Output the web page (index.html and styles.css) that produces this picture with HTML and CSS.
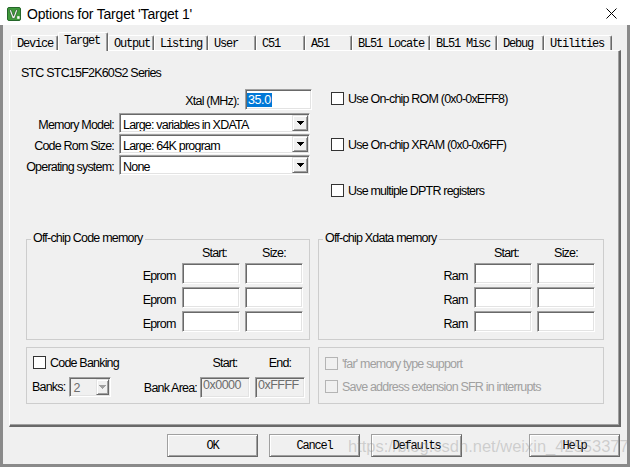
FILE: index.html
```html
<!DOCTYPE html>
<html lang="en">
<head>
<meta charset="utf-8">
<title>Options for Target 'Target 1'</title>
<link rel="stylesheet" href="styles.css">
</head>
<body>
<div class="window">
  <header class="titlebar">
    <svg class="app-icon" viewBox="0 0 14 14" aria-hidden="true">
      <rect x="0.5" y="0.5" width="13" height="13" rx="1.5" fill="#3f9a3a" stroke="#25662a"/>
      <path d="M2.2 2.8 L5.4 11.4 L7.6 11.4 L10.8 2.8 L8.8 2.8 L6.5 9.2 L4.2 2.8 Z" fill="#fff" stroke="#16401a" stroke-width="0.6"/>
      <rect x="10.2" y="9.2" width="2.4" height="2.6" fill="#fff"/>
    </svg>
    <span class="title">Options for Target 'Target 1'</span>
    <svg class="close" viewBox="0 0 11 11" aria-hidden="true">
      <path d="M0.5 0.5 L10.5 10.5 M10.5 0.5 L0.5 10.5" stroke="#000" stroke-width="1"/>
    </svg>
  </header>

  <div class="frame">
    <nav class="tabs">
      <div class="tab">Device</div>
      <div class="tab active">Target</div>
      <div class="tab">Output</div>
      <div class="tab">Listing</div>
      <div class="tab">User</div>
      <div class="tab">C51</div>
      <div class="tab">A51</div>
      <div class="tab">BL51 Locate</div>
      <div class="tab">BL51 Misc</div>
      <div class="tab">Debug</div>
      <div class="tab">Utilities</div>
    </nav>

    <section class="panel">
      <div class="series">STC STC15F2K60S2 Series</div>

      <div class="top">
        <div class="basic">
          <div class="xtal-row">
            <span class="lbl">Xtal (MHz):</span>
            <div class="field xtal"><span class="sel-text">35.0</span></div>
          </div>
          <div class="form">
            <span class="flabel">Memory Model:</span>
            <div class="select">
              <span class="value">Large: variables in XDATA</span>
              <span class="drop"><svg class="arrow" viewBox="0 0 7 4"><path d="M0 0h7v1h-1v1h-1v1h-1v1h-1v-1h-1v-1h-1v-1h-1z"/></svg></span>
            </div>
            <span class="flabel">Code Rom Size:</span>
            <div class="select">
              <span class="value">Large: 64K program</span>
              <span class="drop"><svg class="arrow" viewBox="0 0 7 4"><path d="M0 0h7v1h-1v1h-1v1h-1v1h-1v-1h-1v-1h-1v-1h-1z"/></svg></span>
            </div>
            <span class="flabel">Operating system:</span>
            <div class="select">
              <span class="value">None</span>
              <span class="drop"><svg class="arrow" viewBox="0 0 7 4"><path d="M0 0h7v1h-1v1h-1v1h-1v1h-1v-1h-1v-1h-1v-1h-1z"/></svg></span>
            </div>
          </div>
        </div>

        <div class="options">
          <div class="check"><span class="cb"></span><span class="ctext">Use On-chip ROM (0x0-0xEFF8)</span></div>
          <div class="check"><span class="cb"></span><span class="ctext">Use On-chip XRAM (0x0-0x6FF)</span></div>
          <div class="check"><span class="cb"></span><span class="ctext">Use multiple DPTR registers</span></div>
        </div>
      </div>

      <div class="groups">
        <fieldset class="group mem">
          <legend>Off-chip Code memory</legend>
          <div class="mem-grid">
            <span></span><span class="hd hd-start">Start:</span><span class="hd">Size:</span>
            <span class="rl">Eprom</span><div class="field cell"></div><div class="field cell"></div>
            <span class="rl">Eprom</span><div class="field cell"></div><div class="field cell"></div>
            <span class="rl">Eprom</span><div class="field cell"></div><div class="field cell"></div>
          </div>
        </fieldset>

        <fieldset class="group mem xdata">
          <legend>Off-chip Xdata memory</legend>
          <div class="mem-grid">
            <span></span><span class="hd hd-start">Start:</span><span class="hd">Size:</span>
            <span class="rl">Ram</span><div class="field cell"></div><div class="field cell"></div>
            <span class="rl">Ram</span><div class="field cell"></div><div class="field cell"></div>
            <span class="rl">Ram</span><div class="field cell"></div><div class="field cell"></div>
          </div>
        </fieldset>

        <div class="group bank">
          <div class="bank-row1">
            <div class="check"><span class="cb"></span><span class="ctext">Code Banking</span></div>
            <div class="bank-heads"><span>Start:</span><span>End:</span></div>
          </div>
          <div class="bank-row2">
            <div class="bank-left">
              <span class="banks-lbl">Banks:</span>
              <div class="select dis banks">
                <span class="value">2</span>
                <span class="drop"><svg class="arrow" viewBox="0 0 7 4"><path d="M0 0h7v1h-1v1h-1v1h-1v1h-1v-1h-1v-1h-1v-1h-1z"/></svg></span>
              </div>
            </div>
            <div class="bank-right">
              <span class="area-lbl">Bank Area:</span>
              <div class="field dis addr">0x0000</div>
              <div class="field dis addr">0xFFFF</div>
            </div>
          </div>
        </div>

        <div class="group far">
          <div class="check"><span class="cb dis"></span><span class="ctext dis-text">'far' memory type support</span></div>
          <div class="check"><span class="cb dis"></span><span class="ctext dis-text">Save address extension SFR in interrupts</span></div>
        </div>
      </div>
    </section>

    <div class="buttons">
      <button class="btn" type="button">OK</button>
      <button class="btn" type="button">Cancel</button>
      <button class="btn" type="button">Defaults</button>
      <button class="btn btn-help" type="button">Help</button>
    </div>
  </div>

  <div class="watermark">https://blog.csdn.net/weixin_42553377</div>
</div>
</body>
</html>
```

FILE: styles.css
```css
* { box-sizing: border-box; }
html, body { margin: 0; padding: 0; }
body {
  width: 630px;
  height: 467px;
  overflow: hidden;
  background: #fff;
  font-family: "Liberation Sans", Arial, sans-serif;
  font-size: 12.5px;
  letter-spacing: -0.8px;
  line-height: 14px;
  color: #000;
}

.window {
  position: relative;
  width: 630px;
  height: 467px;
  display: flex;
  flex-direction: column;
}

/* ---------- title bar ---------- */
.titlebar {
  flex: none;
  height: 25px;
  display: flex;
  align-items: center;
  padding: 2px 13px 0 7px;
  background: #fff;
}
.app-icon { width: 14px; height: 14px; flex: none; margin-right: 6px; }
.title {
  flex: 1;
  font-family: "Liberation Sans", Arial, sans-serif;
  font-size: 14px;
  line-height: 16px;
  letter-spacing: -0.2px;
}
.close { width: 11px; height: 11px; flex: none; }

/* ---------- frame ---------- */
.frame {
  flex: 1;
  display: flex;
  flex-direction: column;
  background: #f0f0f0;
  border: 3px solid #8a8a8a;
  border-top: 0;
  padding: 0 6px;
}

/* ---------- tabs ---------- */
.tabs {
  flex: none;
  display: flex;
  align-items: flex-end;
  height: 18px;
  margin-top: 7px;
  padding-left: 2px;
  position: relative;
  z-index: 1;
}
.tab {
  flex: none;
  height: 15px;
  padding: 2px 0 0 5px;
  background: #f0f0f0;
  border-top: 1px solid #fff;
  border-left: 1px solid #fff;
  border-right: 1px solid #696969;
  box-shadow: inset -1px 0 0 #a0a0a0;
  border-top-left-radius: 2px;
  border-top-right-radius: 2px;
  font-family: "Liberation Mono", "Courier New", monospace;
  font-size: 12px;
  line-height: 12px;
  letter-spacing: -1.2px;
  white-space: nowrap;
}
.tab.active {
  height: 19px;
  margin-bottom: -1px;
  padding-top: 2px;
}
.tab:nth-child(1) { width: 47px; }
.tab:nth-child(2) { width: 50px; }
.tab:nth-child(3) { width: 46px; }
.tab:nth-child(4) { width: 54px; }
.tab:nth-child(5) { width: 48px; }
.tab:nth-child(6) { width: 49px; }
.tab:nth-child(7) { width: 47px; }
.tab:nth-child(8) { width: 78px; }
.tab:nth-child(9) { width: 67px; }
.tab:nth-child(10) { width: 47px; }
.tab:nth-child(11) { width: 68px; }

/* ---------- panel ---------- */
.panel {
  flex: none;
  height: 377px;
  border-top: 1px solid #fff;
  border-left: 1px solid #fff;
  border-right: 2px solid #696969;
  border-bottom: 2px solid #696969;
  box-shadow: inset -1px -1px 0 #a0a0a0;
}
.series { margin: 15px 0 0 11px; height: 14px; white-space: nowrap; }

.top { display: flex; margin-top: 9px; }
.basic { width: 302px; flex: none; }
.xtal-row { display: flex; justify-content: flex-end; gap: 6px; height: 21px; }
.xtal-row .lbl { padding-top: 5px; white-space: nowrap; }

.field {
  background: #fff;
  border: 1px solid;
  border-color: #a0a0a0 #fff #fff #a0a0a0;
  box-shadow: inset 1px 1px 0 #696969, inset -1px -1px 0 #e3e3e3;
}
.xtal { width: 67px; height: 21px; padding: 3px 0 0 1px; }
.sel-text {
  display: inline-block;
  height: 14px;
  padding: 0 1px;
  background: #0078d7;
  color: #fff;
  letter-spacing: -0.4px;
}

.form {
  display: grid;
  grid-template-columns: 104px 191px;
  column-gap: 5px;
  row-gap: 1px;
  margin-top: 3px;
}
.flabel { text-align: right; padding-top: 4.5px; white-space: nowrap; }

.select {
  display: flex;
  height: 20px;
  background: #fff;
  border: 1px solid;
  border-color: #a0a0a0 #fff #fff #a0a0a0;
  box-shadow: inset 1px 1px 0 #696969, inset -1px -1px 0 #e3e3e3;
  padding: 1px;
}
.select .value { flex: 1; padding: 2.5px 0 0 2px; white-space: nowrap; overflow: hidden; }
.drop {
  width: 16px;
  flex: none;
  display: flex;
  align-items: center;
  justify-content: center;
  background: #f0f0f0;
  border: 1px solid;
  border-color: #e3e3e3 #696969 #696969 #e3e3e3;
  box-shadow: inset 1px 1px 0 #fff, inset -1px -1px 0 #a0a0a0;
}
.arrow { width: 7px; height: 4px; fill: #000; display: block; }

.options {
  display: flex;
  flex-direction: column;
  gap: 33px;
  margin-left: 19px;
  padding-top: 3px;
}
.check { display: flex; align-items: flex-start; gap: 4px; height: 13px; white-space: nowrap; }
.cb {
  width: 13px;
  height: 13px;
  flex: none;
  background: #fff;
  border: 1px solid #333;
}
.cb.dis { background: #f0f0f0; border-color: #b4b4b4; }
.dis-text { color: #a0a0a0; }

/* ---------- groups ---------- */
.groups {
  display: grid;
  grid-template-columns: 284px 286px;
  column-gap: 8px;
  row-gap: 7px;
  margin: 35px 0 0 16px;
}
.group {
  margin: 0;
  min-width: 0;
  border: 1px solid #cdcdcd;
  padding: 0 6px 7px;
}
.group legend {
  padding: 0 2px 3px;
  margin-left: -2px;
  line-height: 12px;
  white-space: nowrap;
}
.group.xdata { padding-right: 8px; }

.mem-grid {
  display: grid;
  grid-template-columns: 1fr 58px 58px;
  column-gap: 5px;
  row-gap: 3px;
}
.mem-grid .hd { text-align: center; line-height: 12px; margin-bottom: 1px; }
.mem-grid .hd-start { padding-left: 7px; }
.rl { text-align: right; align-self: center; padding: 4px 1.5px 0 0; }
.cell { height: 21px; }

.bank { padding: 8px 4px 5px 6px; }
.bank-row1 { display: flex; justify-content: space-between; height: 13px; }
.bank-heads { display: flex; gap: 5px; }
.bank-heads span { width: 50px; text-align: center; }
.bank-row2 { display: flex; justify-content: space-between; margin-top: 8px; height: 21px; }
.bank-left { display: flex; gap: 4px; margin-left: -1px; }
.banks-lbl { padding-top: 3px; }
.select.dis { background: #f0f0f0; color: #6d6d6d; }
.select.dis .value { padding-top: 1.5px; }
.select.dis .drop { width: 13px; }
.select.dis .arrow { fill: #a0a0a0; }
.banks { width: 42px; }
.bank-right { display: flex; }
.area-lbl { padding-top: 4px; margin-right: 3px; }
.addr { width: 50px; height: 21px; background: #f0f0f0; color: #6d6d6d; padding: 1px 0 0 2px; line-height: 12px; letter-spacing: -0.5px; }
.addr + .addr { margin-left: 5px; }

.far { display: flex; flex-direction: column; gap: 10px; padding: 9px 6px 0; }

/* ---------- buttons ---------- */
.buttons {
  flex: none;
  display: flex;
  gap: 11px;
  margin-top: 7px;
  padding-left: 158px;
}
.btn {
  appearance: none;
  width: 91px;
  height: 23px;
  margin: 0;
  padding: 0;
  background: #f0f0f0;
  border: 1px solid;
  border-color: #a0a0a0 #696969 #696969 #a0a0a0;
  box-shadow: inset 1px 1px 0 #fff, inset -1px -1px 0 #a0a0a0;
  font-family: "Liberation Mono", "Courier New", monospace;
  font-size: 12px;
  letter-spacing: -1.2px;
  color: #000;
}
.btn-help { margin-left: 56px; }

/* ---------- watermark overlay ---------- */
.watermark {
  position: absolute;
  left: 348px;
  top: 437px;
  font-family: "Liberation Sans", Arial, sans-serif;
  font-size: 16.5px;
  line-height: 19px;
  letter-spacing: 0;
  color: rgba(140, 140, 140, 0.35);
  white-space: nowrap;
  pointer-events: none;
}
```
